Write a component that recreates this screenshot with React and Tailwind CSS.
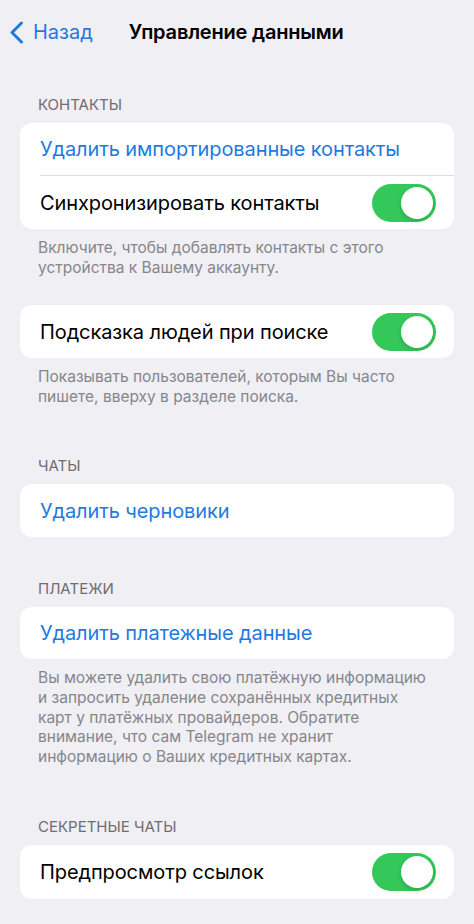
import React from "react";

function Toggle() {
  return (
    <div className="w-[64px] h-[38px] rounded-full bg-[#34c759] p-[3px] flex justify-end shrink-0">
      <div className="w-[32px] h-[32px] rounded-full bg-white shadow-[0_2px_4px_rgba(0,0,0,0.15)]" />
    </div>
  );
}

function Row({ children, blue, toggle, h = "h-[53px]" }) {
  return (
    <div className={`${h} flex items-center justify-between pl-[20px] pr-[18px]`}>
      <span className={`text-[20px] tracking-[-0.1px] ${blue ? "text-[#1f7ae0]" : "text-black"}`}>{children}</span>
      {toggle && <Toggle />}
    </div>
  );
}

function SectionHeader({ children, mt }) {
  return (
    <div className={`${mt} mb-[8px] pl-[38px] h-[20px] leading-[20px] text-[15px] text-[#6d6d72] uppercase`}>
      {children}
    </div>
  );
}

function Footer({ children }) {
  return (
    <div className="mt-[9px] px-[38px] text-[15.5px] leading-[19.6px] text-[#86868b]">{children}</div>
  );
}

function Card({ children, mt = "" }) {
  return <div className={`${mt} mx-[20px] bg-white rounded-[12px] overflow-hidden`}>{children}</div>;
}

export default function App() {
  return (
    <div className="w-[474px] h-[924px] bg-[#efeff4] overflow-hidden" style={{ fontFamily: "Inter, 'Noto Sans', sans-serif" }}>
      <div className="h-[64px] flex items-center relative">
        <div className="flex items-center pl-[9px]">
          <svg width="15" height="23" viewBox="0 0 15 23" className="mr-[9px]">
            <path d="M12.5 2 L3 11.5 L12.5 21" fill="none" stroke="#1f7ae0" strokeWidth="3" strokeLinecap="round" strokeLinejoin="round" />
          </svg>
          <span className="text-[20px] text-[#1f7ae0]">Назад</span>
        </div>
        <span className="ml-[36px] text-[20px] font-semibold text-black tracking-[-0.2px]">Управление данными</span>
      </div>

      <SectionHeader mt="mt-[31px]">Контакты</SectionHeader>
      <Card>
        <Row blue h="h-[52px]">Удалить импортированные контакты</Row>
        <div className="ml-[20px] h-px bg-[#dcdce0]" />
        <Row toggle>Синхронизировать контакты</Row>
      </Card>
      <Footer>
        Включите, чтобы добавлять контакты с этого
        <br />
        устройства к Вашему аккаунту.
      </Footer>

      <Card mt="mt-[28px]">
        <Row toggle>Подсказка людей при поиске</Row>
      </Card>
      <Footer>
        Показывать пользователей, которым Вы часто
        <br />
        пишете, вверху в разделе поиска.
      </Footer>

      <SectionHeader mt="mt-[50px]">Чаты</SectionHeader>
      <Card>
        <Row blue>Удалить черновики</Row>
      </Card>

      <SectionHeader mt="mt-[42px]">Платежи</SectionHeader>
      <Card>
        <Row blue h="h-[52px]">Удалить платежные данные</Row>
      </Card>
      <Footer>
        Вы можете удалить свою платёжную информацию
        <br />
        и запросить удаление сохранённых кредитных
        <br />
        карт у платёжных провайдеров. Обратите
        <br />
        внимание, что сам Telegram не хранит
        <br />
        информацию о Ваших кредитных картах.
      </Footer>

      <SectionHeader mt="mt-[51px]">Секретные чаты</SectionHeader>
      <Card mt="">
        <Row toggle h="h-[54px]">Предпросмотр ссылок</Row>
      </Card>
    </div>
  );
}
